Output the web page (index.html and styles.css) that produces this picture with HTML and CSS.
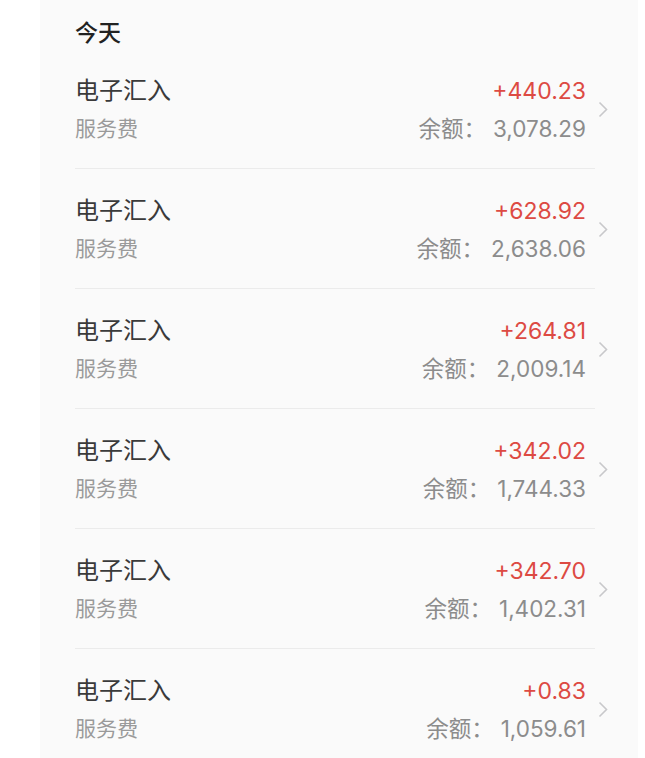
FILE: index.html
```html
<!DOCTYPE html>
<html lang="zh-CN">
<head>
  <meta charset="UTF-8">
  <meta name="viewport" content="width=device-width, initial-scale=1.0">
  <title>交易明细</title>
  <link rel="stylesheet" href="styles.css">
</head>
<body>
  <div class="panel">
    <div class="day-title">今天</div>
    <ul class="records">
      <li class="record">
        <div class="record-body">
          <div class="record-left">
            <div class="record-name">电子汇入</div>
            <div class="record-note">服务费</div>
          </div>
          <div class="record-right">
            <div class="record-amount">+440.23</div>
            <div class="record-balance">余额：<span class="balance-value">3,078.29</span></div>
          </div>
        </div>
        <svg class="chevron" width="10" height="17" viewBox="0 0 10 17"><path d="M1.5 1.5 L8.5 8.5 L1.5 15.5" fill="none" stroke="#c8c8cb" stroke-width="1.6"/></svg>
      </li>
      <li class="record">
        <div class="record-body">
          <div class="record-left">
            <div class="record-name">电子汇入</div>
            <div class="record-note">服务费</div>
          </div>
          <div class="record-right">
            <div class="record-amount">+628.92</div>
            <div class="record-balance">余额：<span class="balance-value">2,638.06</span></div>
          </div>
        </div>
        <svg class="chevron" width="10" height="17" viewBox="0 0 10 17"><path d="M1.5 1.5 L8.5 8.5 L1.5 15.5" fill="none" stroke="#c8c8cb" stroke-width="1.6"/></svg>
      </li>
      <li class="record">
        <div class="record-body">
          <div class="record-left">
            <div class="record-name">电子汇入</div>
            <div class="record-note">服务费</div>
          </div>
          <div class="record-right">
            <div class="record-amount">+264.81</div>
            <div class="record-balance">余额：<span class="balance-value">2,009.14</span></div>
          </div>
        </div>
        <svg class="chevron" width="10" height="17" viewBox="0 0 10 17"><path d="M1.5 1.5 L8.5 8.5 L1.5 15.5" fill="none" stroke="#c8c8cb" stroke-width="1.6"/></svg>
      </li>
      <li class="record">
        <div class="record-body">
          <div class="record-left">
            <div class="record-name">电子汇入</div>
            <div class="record-note">服务费</div>
          </div>
          <div class="record-right">
            <div class="record-amount">+342.02</div>
            <div class="record-balance">余额：<span class="balance-value">1,744.33</span></div>
          </div>
        </div>
        <svg class="chevron" width="10" height="17" viewBox="0 0 10 17"><path d="M1.5 1.5 L8.5 8.5 L1.5 15.5" fill="none" stroke="#c8c8cb" stroke-width="1.6"/></svg>
      </li>
      <li class="record">
        <div class="record-body">
          <div class="record-left">
            <div class="record-name">电子汇入</div>
            <div class="record-note">服务费</div>
          </div>
          <div class="record-right">
            <div class="record-amount">+342.70</div>
            <div class="record-balance">余额：<span class="balance-value">1,402.31</span></div>
          </div>
        </div>
        <svg class="chevron" width="10" height="17" viewBox="0 0 10 17"><path d="M1.5 1.5 L8.5 8.5 L1.5 15.5" fill="none" stroke="#c8c8cb" stroke-width="1.6"/></svg>
      </li>
      <li class="record">
        <div class="record-body">
          <div class="record-left">
            <div class="record-name">电子汇入</div>
            <div class="record-note">服务费</div>
          </div>
          <div class="record-right">
            <div class="record-amount">+0.83</div>
            <div class="record-balance">余额：<span class="balance-value">1,059.61</span></div>
          </div>
        </div>
        <svg class="chevron" width="10" height="17" viewBox="0 0 10 17"><path d="M1.5 1.5 L8.5 8.5 L1.5 15.5" fill="none" stroke="#c8c8cb" stroke-width="1.6"/></svg>
      </li>
    </ul>
  </div>
</body>
</html>
```

FILE: styles.css
```css
body {
  margin: 0;
  padding: 0;
  background-color: #fff;
  font-family: "Noto Sans CJK SC", "Noto Sans", sans-serif;
}
.panel {
  margin-left: 40px;
  width: 563px;
  min-height: 758px;
  padding-left: 35px;
  background-color: #fafafa;
}
.day-title {
  padding: 18px 0 5px;
  font-size: 23px;
  line-height: 26px;
  font-weight: 500;
  color: #222;
}
.records {
  list-style: none;
  margin: 0;
  padding: 0;
}
.record {
  display: flex;
  align-items: center;
}
.record-body {
  width: 511px;
  display: flex;
  justify-content: space-between;
  padding: 25px 9px 26px 0;
  border-bottom: 1px solid #ebebeb;
}
.record-name {
  font-size: 24px;
  line-height: 30px;
  color: #3a3a3a;
}
.record-note {
  margin-top: 8px;
  font-size: 21px;
  line-height: 30px;
  color: #9a9a9a;
}
.record-right {
  padding-top: 2px;
  margin-bottom: -2px;
  text-align: right;
  font-family: "Inter", "Noto Sans CJK SC", sans-serif;
}
.record-amount {
  font-size: 23px;
  line-height: 30px;
  color: #dd4a43;
}
.record-balance {
  margin-top: 8px;
  font-size: 22.5px;
  line-height: 30px;
  color: #8c8c8c;
}
.balance-value {
  margin-left: 7px;
}
.chevron {
  margin-left: 3px;
}
```
